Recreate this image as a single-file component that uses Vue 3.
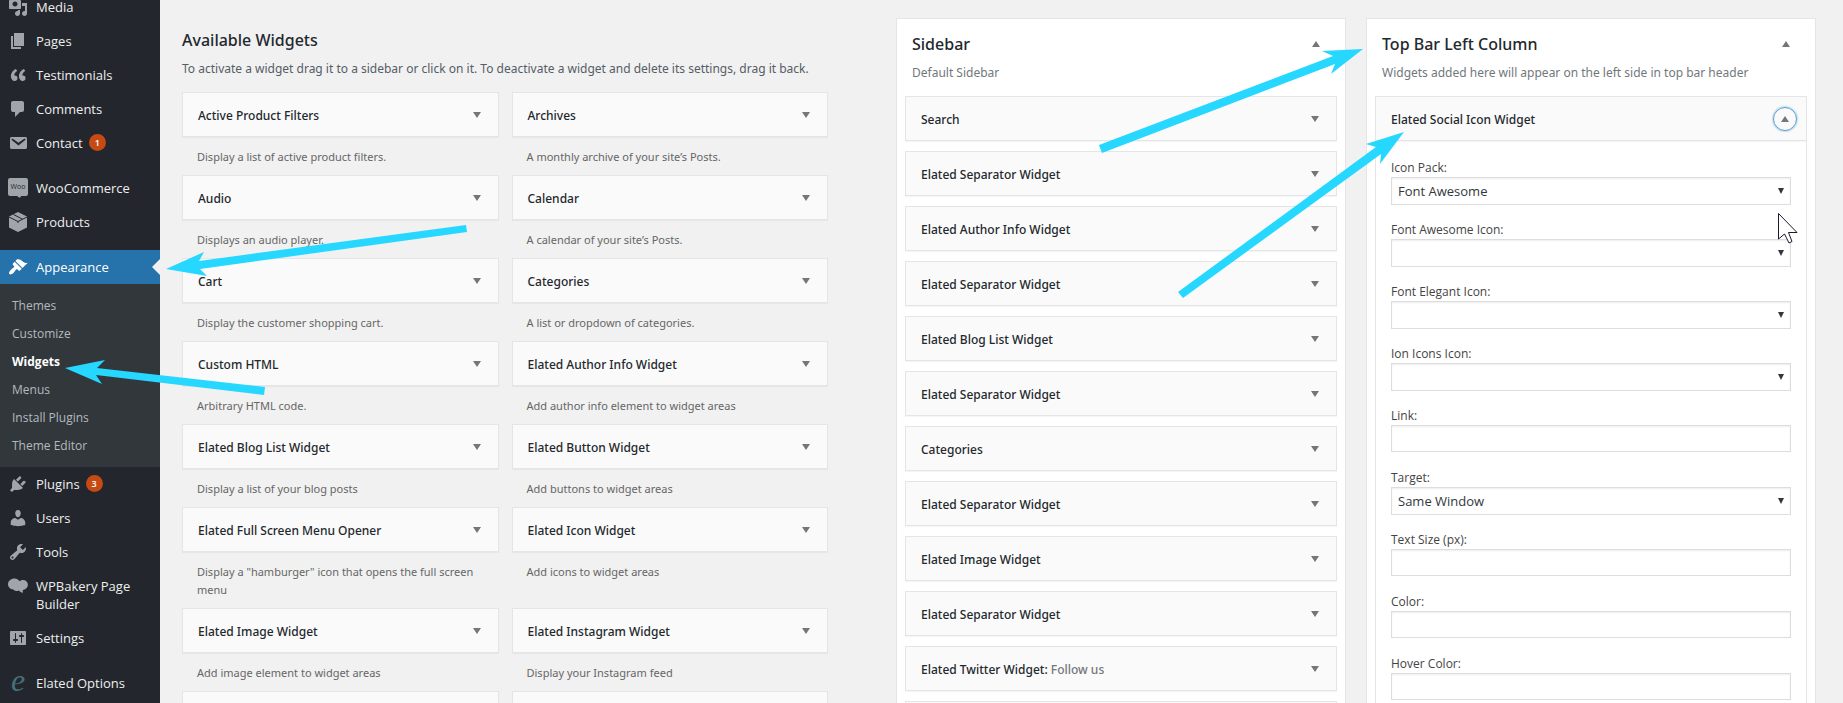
<script setup>
const icons = {
  media: 'M13 11V4c0-.55-.45-1-1-1h-1.67L9 1H5L3.67 3H2c-.55 0-1 .45-1 1v7c0 .55.45 1 1 1h10c.55 0 1-.45 1-1zM7 4.5c1.38 0 2.5 1.12 2.5 2.5S8.38 9.5 7 9.5 4.500 8.380 4.500 7 5.620 4.500 7 4.500zM14 6h5v10.500c0 1.380-1.120 2.500-2.500 2.500S14 17.880 14 16.500s1.120-2.500 2.500-2.500c.17 0 .34.02.5.05V9h-3V6zm-4 8.050V13h2v3.500c0 1.380-1.120 2.500-2.500 2.500S7 17.880 7 16.500 8.120 14 9.500 14c.17 0 .34.02.5.05z',
  page: 'M6 15V2h10v13H6zm-1 1h8v2H3V5h2v11z',
  quote: 'M9.490 13.220c0-.74-.2-1.380-.61-1.900-.62-.78-1.830-.88-2.530-.72-.29-1.650 1.110-3.750 2.920-4.650L7.880 4c-2.730 1.300-5.420 4.280-4.960 8.050C3.210 14.430 4.590 16 6.540 16c.85 0 1.560-.25 2.120-.75s.83-1.180.83-2.030zm8.050 0c0-.74-.2-1.380-.61-1.900-.63-.78-1.830-.88-2.530-.72-.29-1.650 1.110-3.750 2.920-4.650L15.930 4c-2.730 1.300-5.410 4.280-4.950 8.050.29 2.380 1.660 3.950 3.610 3.950.85 0 1.560-.25 2.120-.75s.83-1.180.83-2.030z',
  comment: 'M5 2h9c1.100 0 2 .9 2 2v7c0 1.100-.9 2-2 2h-2l-5 5v-5H5c-1.100 0-2-.9-2-2V4c0-1.100.9-2 2-2z',
  mail: 'M3.870 4h13.250C18.370 4 19 4.590 19 5.790v8.420c0 1.190-.63 1.790-1.880 1.790H3.870c-1.250 0-1.880-.6-1.880-1.790V5.790c0-1.200.63-1.790 1.880-1.790zm6.620 8.600l6.740-5.530c.24-.2.43-.66.13-1.070-.29-.41-.82-.42-1.170-.17l-5.700 3.860L4.800 5.830c-.35-.25-.88-.24-1.170.17-.3.41-.11.87.13 1.070z',
  brush: 'M14.480 11.060L7.410 3.990l1.500-1.500c.5-.56 2.300-.47 3.510.32 1.210.8 1.430 1.280 2.910 2.100 1.180.64 2.450 1.260 4.450.85zm-.71.71L6.700 4.700 4.930 6.470c-.39.39-.39 1.020 0 1.410l1.060 1.060c.39.39.39 1.030 0 1.420-.6.6-1.430 1.110-2.210 1.690-.35.26-.7.53-1.010.84C1.430 14.230.4 16.080 1.400 17.070c.99 1 2.840-.03 4.180-1.360.31-.31.58-.66.85-1.020.57-.78 1.080-1.610 1.690-2.210.39-.39 1.020-.39 1.410 0l1.060 1.060c.39.39 1.020.39 1.410 0z',
  plug: 'M13.110 4.360L9.870 7.600 8 5.730l3.240-3.240c.35-.34 1.050-.2 1.560.32.52.51.66 1.210.31 1.550zm-8 1.770l.91-1.120 9.010 9.010-1.190.84c-.71.71-2.630 1.160-3.820 1.160H6.140L4.900 17.260c-.59.59-1.540.59-2.120 0-.59-.58-.59-1.530 0-2.120l1.240-1.240v-3.880c0-1.130.4-3.190 1.090-3.890zm7.260 3.970l3.240-3.240c.34-.35 1.040-.21 1.550.31.52.51.66 1.210.31 1.550l-3.240 3.250z',
  user: 'M10 9.250c-2.270 0-2.730-3.440-2.730-3.440C7 4.020 7.820 2 9.970 2c2.160 0 2.980 2.020 2.710 3.810 0 0-.41 3.440-2.680 3.440zm0 2.570L12.720 10c2.390 0 4.520 2.330 4.520 4.530v2.490s-3.650 1.130-7.240 1.130c-3.650 0-7.240-1.130-7.240-1.130v-2.490c0-2.250 1.940-4.480 4.470-4.480z',
  wrench: 'M16.680 9.770c-1.340 1.340-3.300 1.670-4.950.99l-5.410 6.520c-.99.99-2.590.99-3.580 0s-.99-2.590 0-3.570l6.520-5.420c-.68-1.650-.35-3.610.99-4.950 1.280-1.280 3.120-1.620 4.720-1.060l-2.890 2.890 2.820 2.820 2.860-2.870c.53 1.580.18 3.390-1.080 4.650zM3.810 16.210c.4.39 1.040.39 1.430 0 .4-.4.4-1.040 0-1.430-.39-.4-1.030-.4-1.430 0-.39.39-.39 1.030 0 1.430z',
  sliders: 'M18 16V4c0-.55-.45-1-1-1H3c-.55 0-1 .45-1 1v12c0 .55.45 1 1 1h14c.55 0 1-.45 1-1zM8 11h1c.55 0 1 .45 1 1s-.45 1-1 1H8v1.500c0 .28-.22.5-.5.5s-.5-.22-.5-.5V13H6c-.55 0-1-.45-1-1s.45-1 1-1h1V5.500c0-.28.22-.5.5-.5s.5.22.5.5V11zm5-2h-1c-.55 0-1-.45-1-1s.45-1 1-1h1V5.500c0-.28.22-.5.5-.5s.5.22.5.5V7h1c.55 0 1 .45 1 1s-.45 1-1 1h-1v5.500c0 .28-.22.5-.5.5s-.5-.22-.5-.5V9z',
  cloud: 'M6.500 2.500c2.200 0 4 1.100 5.300 2.800 1-1 2.400-1.500 3.800-1.200 2.700.4 4.400 2.500 4.300 5-.1 2.300-1.800 4-4 4.600l-1.200.3.300 2.700c-1.800-.4-3.200-1.200-4.200-2.300-3.100 1.100-4.600.2-5.500-.8C2.200 13.200 0 11.200 0 8.300 0 5 2.900 2.500 6.500 2.500z'
}

const menu = [
  { label: 'Media', icon: 'media' },
  { label: 'Pages', icon: 'page' },
  { label: 'Testimonials', icon: 'quote' },
  { label: 'Comments', icon: 'comment' },
  { label: 'Contact', icon: 'mail', count: 1 },
  { separator: true },
  { label: 'WooCommerce', icon: 'woo' },
  { label: 'Products', icon: 'box' },
  { separator: true },
  {
    label: 'Appearance', icon: 'brush', current: true,
    children: ['Themes', 'Customize', 'Widgets', 'Menus', 'Install Plugins', 'Theme Editor']
  },
  { label: 'Plugins', icon: 'plug', count: 3 },
  { label: 'Users', icon: 'user' },
  { label: 'Tools', icon: 'wrench' },
  { label: 'WPBakery Page Builder', icon: 'cloud' },
  { label: 'Settings', icon: 'sliders' },
  { separator: true },
  { label: 'Elated Options', icon: 'elated' }
]

const available = [
  ['Active Product Filters', 'Display a list of active product filters.'],
  ['Archives', 'A monthly archive of your site’s Posts.'],
  ['Audio', 'Displays an audio player.'],
  ['Calendar', 'A calendar of your site’s Posts.'],
  ['Cart', 'Display the customer shopping cart.'],
  ['Categories', 'A list or dropdown of categories.'],
  ['Custom HTML', 'Arbitrary HTML code.'],
  ['Elated Author Info Widget', 'Add author info element to widget areas'],
  ['Elated Blog List Widget', 'Display a list of your blog posts'],
  ['Elated Button Widget', 'Add buttons to widget areas'],
  ['Elated Full Screen Menu Opener', 'Display a "hamburger" icon that opens the full screen menu'],
  ['Elated Icon Widget', 'Add icons to widget areas'],
  ['Elated Image Widget', 'Add image element to widget areas'],
  ['Elated Instagram Widget', 'Display your Instagram feed'],
  ['', ''],
  ['', '']
]

const sidebar = [
  { title: 'Search' },
  { title: 'Elated Separator Widget' },
  { title: 'Elated Author Info Widget' },
  { title: 'Elated Separator Widget' },
  { title: 'Elated Blog List Widget' },
  { title: 'Elated Separator Widget' },
  { title: 'Categories' },
  { title: 'Elated Separator Widget' },
  { title: 'Elated Image Widget' },
  { title: 'Elated Separator Widget' },
  { title: 'Elated Twitter Widget', note: 'Follow us' },
  { title: '' }
]

const fields = [
  { id: 'icon-pack', label: 'Icon Pack:', options: ['Font Awesome'] },
  { id: 'fa-icon', label: 'Font Awesome Icon:', options: [''] },
  { id: 'fe-icon', label: 'Font Elegant Icon:', options: [''] },
  { id: 'ion-icon', label: 'Ion Icons Icon:', options: [''] },
  { id: 'link', label: 'Link:' },
  { id: 'target', label: 'Target:', options: ['Same Window'] },
  { id: 'text-size', label: 'Text Size (px):' },
  { id: 'color', label: 'Color:' },
  { id: 'hover-color', label: 'Hover Color:' }
]

const arrows = [
  '166,269 204,252 199,261 466,225 467,232 200,269 207,276',
  '65,368 105,360 97,368 265,387 264,395 96,375 102,384',
  '1363,49 1331,74 1335,64 1102,153 1099,145 1333,56 1322,51',
  '1404,132 1380,164 1381,154 1183,298 1178,292 1376,147 1366,144'
]
</script>

<template>
  <div class="admin">
    <nav class="menu" aria-label="Main menu">
      <ul class="menu-list">
        <li
          v-for="(item, i) in menu"
          :key="i"
          :class="{ separator: item.separator, current: item.current }"
        >
          <a v-if="!item.separator" href="#" class="menu-link">
            <svg class="menu-icon" viewBox="0 0 20 20" aria-hidden="true">
              <g v-if="item.icon === 'woo'">
                <path d="M2 0h16a2 2 0 0 1 2 2v14a2 2 0 0 1-2 2h-5l-1 2-3-2H2a2 2 0 0 1-2-2V2a2 2 0 0 1 2-2z" />
                <text x="10" y="11" class="woo">Woo</text>
              </g>
              <g v-else-if="item.icon === 'box'">
                <path d="M10 0l9 4.500v11L10 20l-9-4.500v-11z" />
                <path class="seam" d="M1 5l9 4.500L19 5M5.500 2.500l9 4.700M10 9.500V11" />
              </g>
              <text v-else-if="item.icon === 'elated'" x="10" y="18" class="elated">e</text>
              <path v-else :d="icons[item.icon]" />
            </svg>
            <span class="menu-name">{{ item.label }}<span v-if="item.count" class="count">{{ item.count }}</span></span>
          </a>
          <ul v-if="item.children" class="submenu">
            <li v-for="child in item.children" :key="child">
              <a href="#" :class="{ active: child === 'Widgets' }">{{ child }}</a>
            </li>
          </ul>
        </li>
      </ul>
    </nav>

    <main class="content">
      <section class="available">
        <h2>Available Widgets</h2>
        <p class="intro">To activate a widget drag it to a sidebar or click on it. To deactivate a widget and delete its settings, drag it back.</p>
        <div class="available-grid">
          <div v-for="(w, i) in available" :key="i" class="available-item">
            <div class="widget">
              <h3>{{ w[0] }}</h3>
              <button class="toggle" type="button" :aria-label="'Add ' + w[0]">
                <svg viewBox="0 0 8 6"><path d="M0 0h8L4 6z" /></svg>
              </button>
            </div>
            <p class="description">{{ w[1] }}</p>
          </div>
        </div>
      </section>

      <div class="areas">
        <section class="area">
          <header class="area-head">
            <h2>Sidebar</h2>
            <button class="toggle" type="button" aria-label="Collapse Sidebar">
              <svg viewBox="0 0 8 6"><path d="M0 6h8L4 0z" /></svg>
            </button>
          </header>
          <p class="area-note">Default Sidebar</p>
          <div class="area-widgets">
            <div v-for="(w, i) in sidebar" :key="i" class="widget">
              <h3>{{ w.title }}<span v-if="w.note">: <span class="note">{{ w.note }}</span></span></h3>
              <button class="toggle" type="button" :aria-label="'Edit ' + w.title">
                <svg viewBox="0 0 8 6"><path d="M0 0h8L4 6z" /></svg>
              </button>
            </div>
          </div>
        </section>

        <section class="area">
          <header class="area-head">
            <h2>Top Bar Left Column</h2>
            <button class="toggle" type="button" aria-label="Collapse Top Bar Left Column">
              <svg viewBox="0 0 8 6"><path d="M0 6h8L4 0z" /></svg>
            </button>
          </header>
          <p class="area-note">Widgets added here will appear on the left side in top bar header</p>
          <div class="area-widgets">
            <div>
              <div class="widget open">
                <h3>Elated Social Icon Widget</h3>
                <button class="toggle focused" type="button" aria-label="Close Elated Social Icon Widget">
                  <svg viewBox="0 0 8 6"><path d="M0 6h8L4 0z" /></svg>
                </button>
              </div>
              <form class="widget-form">
                <div v-for="f in fields" :key="f.id" class="field">
                  <label :for="f.id">{{ f.label }}</label>
                  <div v-if="f.options" class="select-wrap">
                    <select :id="f.id">
                      <option v-for="o in f.options" :key="o">{{ o }}</option>
                    </select>
                    <svg class="caret" viewBox="0 0 6 6" aria-hidden="true"><path d="M0 0h6L3 6z" /></svg>
                  </div>
                  <input v-else :id="f.id" type="text">
                </div>
              </form>
            </div>
          </div>
        </section>
      </div>
    </main>

    <svg class="annotations" aria-hidden="true">
      <polygon v-for="a in arrows" :key="a" :points="a" />
      <path class="pointer" d="M1778.500 213.500v25.500l6-5 4.500 9 3-1.500-3.500-9h8.500z" />
    </svg>
  </div>
</template>

<style>
body {
  background: #f1f1f1;
}
</style>

<style scoped>
.admin {
  position: relative;
  display: flex;
  height: 100vh;
  overflow: hidden;
  background: #f1f1f1;
  color: #444;
  font: 12px/18px "Noto Sans", "Open Sans", sans-serif;
}

.admin * {
  box-sizing: border-box;
}

ul {
  list-style: none;
  margin: 0;
  padding: 0;
}

h2,
h3,
p {
  margin: 0;
}

a {
  text-decoration: none;
}

.menu {
  flex: 0 0 160px;
  background: #23262d;
  font-family: "Open Sans", "Noto Sans", sans-serif;
}

.menu-list {
  margin-top: -10px;
}

.separator {
  height: 11px;
}

.menu-link {
  position: relative;
  display: flex;
  padding: 8px;
  gap: 8px;
  color: #eee;
  font-size: 13px;
}

.menu-icon {
  flex: none;
  width: 20px;
  height: 20px;
  margin: -1px 0;
  overflow: visible;
  fill: #a0a5aa;
}

.seam {
  fill: none;
  stroke: #23262d;
  stroke-width: 1;
}

.woo {
  fill: #23262d;
  font: 7px "Open Sans", sans-serif;
  text-anchor: middle;
}

.elated {
  fill: #45707a;
  font: italic 32px "Liberation Serif", serif;
  text-anchor: middle;
}

.current > .menu-link {
  background: #2573aa;
  color: #fff;
}

.current > .menu-link::after {
  content: "";
  position: absolute;
  top: 9px;
  right: 0;
  border: 8px solid transparent;
  border-left: 0;
  border-right-color: #f1f1f1;
}

.current .menu-icon {
  fill: #fff;
}

.count {
  display: inline-block;
  min-width: 17px;
  height: 17px;
  margin-left: 6px;
  border-radius: 9px;
  background: #c64a14;
  color: #fff;
  font-size: 9px;
  font-weight: 600;
  line-height: 17px;
  text-align: center;
  vertical-align: top;
}

.submenu {
  padding: 8px 0 7px;
  background: #32373c;
}

.submenu a {
  display: block;
  padding: 5px 12px;
  color: #b4b9be;
}

.submenu .active {
  color: #fff;
  font-weight: 700;
}

.content {
  display: flex;
  flex: 1;
  gap: 68px;
  min-width: 0;
  padding: 18px 27px 0 22px;
}

.available {
  flex: 646 1 0;
  min-width: 0;
}

h2 {
  color: #23282d;
  font-size: 16px;
  font-weight: 500;
  line-height: 24px;
}

.available > h2 {
  margin-top: 10px;
}

.intro {
  margin: 8px 0 14px;
  color: #555d66;
  white-space: nowrap;
}

.available-grid {
  display: grid;
  grid-template-columns: 1fr 1fr;
  column-gap: 13px;
}

.widget {
  display: flex;
  align-items: center;
  height: 45px;
  padding-left: 15px;
  border: 1px solid #e5e5e5;
  background: #fafafa;
  box-shadow: 0 1px 1px rgba(0, 0, 0, 0.04);
}

.widget h3 {
  flex: 1;
  padding-top: 2px;
  color: #23282d;
  font-size: 12px;
  font-weight: 500;
  line-height: 18px;
}

.note {
  color: #72777c;
}

.toggle {
  display: flex;
  align-items: center;
  justify-content: center;
  width: 24px;
  height: 24px;
  margin-right: 9px;
  padding: 0;
  border: 1px solid transparent;
  border-radius: 50%;
  background: none;
}

.toggle svg {
  width: 8px;
  height: 6px;
  fill: #72777c;
}

.toggle.focused {
  border-color: #5b9dd9;
  box-shadow: 0 0 2px rgba(30, 140, 190, 0.8);
}

.description {
  min-height: 38px;
  padding: 11px 15px 9px;
  color: #666;
  font-size: 11px;
}

.areas {
  display: grid;
  flex: 920 1 0;
  grid-template-columns: 1fr 1fr;
  gap: 20px;
  min-width: 0;
}

.area {
  min-width: 0;
  padding: 0 8px;
  border: 1px solid #e5e5e5;
  background: #fff;
}

.area-head {
  display: flex;
  align-items: center;
  justify-content: space-between;
  padding: 13px 0 0 7px;
}

.area-note {
  margin: 8px 7px 14px;
  color: #72777c;
}

.area-widgets {
  display: grid;
  gap: 10px;
}

.widget-form {
  padding: 18px 15px 0;
  border: 1px solid #e5e5e5;
  border-top: 0;
}

.field {
  display: flex;
  flex-direction: column;
  height: 62px;
}

label {
  color: #444;
  font-family: "Open Sans", "Noto Sans", sans-serif;
}

.select-wrap {
  position: relative;
  display: flex;
}

select,
input {
  width: 100%;
  height: 28px;
  padding: 0 6px;
  border: 1px solid #ddd;
  border-radius: 0;
  background: #fff;
  box-shadow: inset 0 1px 2px rgba(0, 0, 0, 0.07);
  color: #32373c;
  font: 13px/18px "Open Sans", "Noto Sans", sans-serif;
  appearance: none;
}

input {
  height: 27px;
}

.caret {
  position: absolute;
  top: 11px;
  right: 7px;
  width: 6px;
  height: 6px;
  fill: #32373c;
  pointer-events: none;
}

.annotations {
  position: absolute;
  inset: 0;
  width: 100%;
  height: 100%;
  fill: #26d7ff;
  pointer-events: none;
}

.pointer {
  fill: #fff;
  stroke: #1a1a2e;
  stroke-width: 1;
}
</style>
